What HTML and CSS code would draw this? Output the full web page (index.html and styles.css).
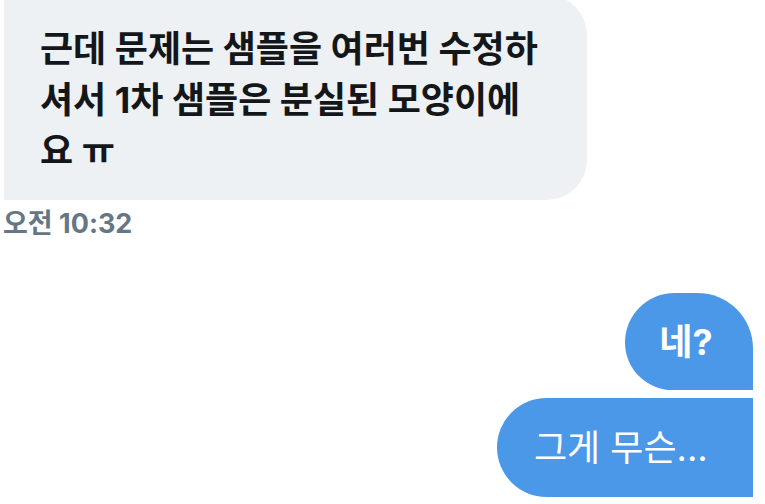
FILE: index.html
```html
<!DOCTYPE html>
<html lang="ko">
<head>
<meta charset="utf-8">
<title>Chat</title>
<link rel="stylesheet" href="styles.css">
</head>
<body>
<div class="thread">
  <div class="msg-in">
    <div class="bubble-in">근데 문제는 샘플을 여러번 수정하<br>셔서 1차 샘플은 분실된 모양이에<br>요 ㅠ</div>
    <div class="time">오전 10:32</div>
  </div>
  <div class="msg-out">
    <div class="bubble-out first">네?</div>
    <div class="bubble-out last">그게 무슨...</div>
  </div>
</div>
</body>
</html>
```
FILE: styles.css
```css
html, body {
  margin: 0;
  padding: 0;
  background: #ffffff;
}
body {
  width: 765px;
  height: 504px;
  overflow: hidden;
  font-family: Inter, "Noto Sans CJK KR", sans-serif;
}
.thread {
  display: flex;
  flex-direction: column;
}
.msg-in {
  display: flex;
  flex-direction: column;
  align-items: flex-start;
  margin-top: -5px;
  margin-left: 4px;
}
.bubble-in {
  box-sizing: border-box;
  width: 583px;
  height: 205px;
  padding: 29px 0 0 36px;
  background: #eef1f3;
  border-radius: 0 40px 40px 0;
  color: #14171a;
  font-size: 36px;
  font-weight: 700;
  line-height: 51px;
  white-space: nowrap;
}
.time {
  margin-top: 9px;
  margin-left: -1px;
  font-size: 27px;
  line-height: 30px;
  font-weight: 700;
  color: #657786;
}
.msg-out {
  display: flex;
  flex-direction: column;
  align-items: flex-end;
  gap: 8px;
  margin-top: 54px;
  margin-right: 12px;
}
.bubble-out {
  box-sizing: border-box;
  display: flex;
  align-items: center;
  background: #4b98e8;
  color: #ffffff;
  font-size: 36px;
  line-height: 40px;
  white-space: nowrap;
}
.bubble-out.first {
  width: 128px;
  height: 97px;
  justify-content: center;
  padding-right: 6px;
  font-weight: 700;
  border-radius: 50px 56px 0 48px;
}
.bubble-out.last {
  width: 256px;
  height: 99px;
  padding-left: 37px;
  font-weight: 400;
  border-radius: 50px 0 0 50px;
}
```
